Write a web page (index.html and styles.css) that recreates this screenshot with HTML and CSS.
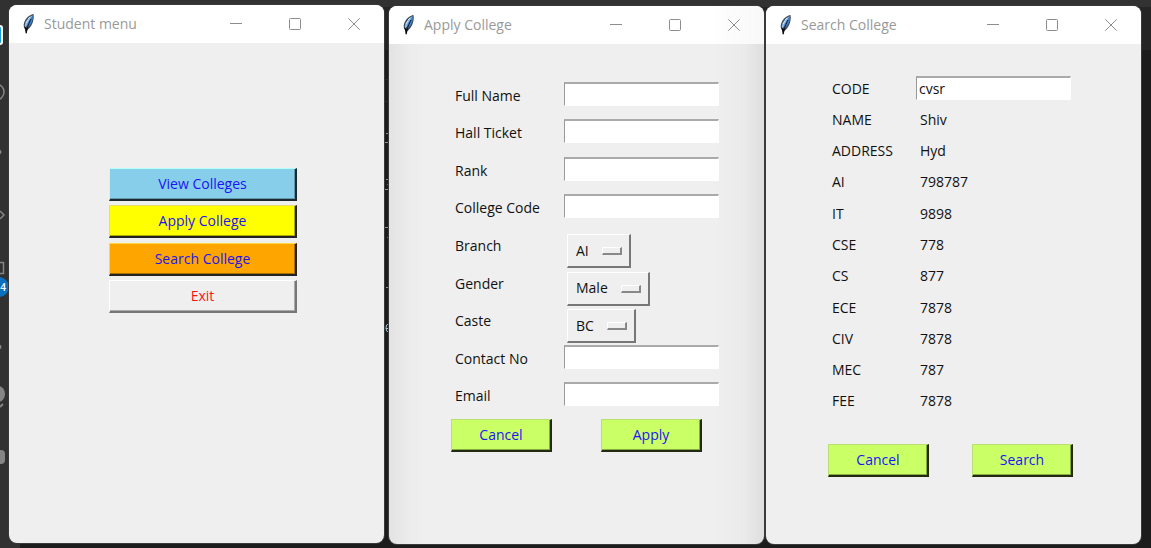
FILE: index.html
```html
<!DOCTYPE html>
<html lang="en">
<head>
<meta charset="utf-8">
<title>College admissions</title>
<link rel="stylesheet" href="styles.css">
</head>
<body>
<svg class="defs" aria-hidden="true">
  <symbol id="feather" viewBox="0 0 14 22">
    <path d="M11.500 1C8 1.500 3.500 5 2 10c-.7 2.500-.2 5 1.300 6.500L4 21l1.200-4C9 14.500 12.800 8 11.500 1z" fill="#3b4653"/>
    <path d="M10.700 2.200C7.500 3.500 4 7 3 11c-.4 1.600-.2 3 .4 4z" fill="#8fbdeb"/>
    <path d="M10.700 2.500c.8 4-1.200 8.500-5 12L5.500 10z" fill="#3f80d0"/>
    <path d="M9 6C7 10 5.500 13 4.300 20" stroke="#10151c" fill="none"/>
    <path d="M2.500 13l3 3-1.500 5z" fill="#090b10"/>
    <path d="M4 10l2-3M6 6l2-2" stroke="#d2e5f6"/>
  </symbol>
  <symbol id="minimize" viewBox="0 0 12 12"><path d="M0 5.500h12" stroke="#8d8d8d" fill="none"/></symbol>
  <symbol id="maximize" viewBox="0 0 12 12"><rect x=".5" y=".5" width="11" height="11" rx="1" stroke="#8d8d8d" fill="none"/></symbol>
  <symbol id="close" viewBox="0 0 12 12"><path d="M.3.3l11.400 11.400M11.700.3L.3 11.700" stroke="#8d8d8d" fill="none"/></symbol>
</svg>

<div class="editor" aria-hidden="true">
  <div class="editor-title"></div>
  <div class="editor-tabs"></div>
  <div class="editor-activity">
    <svg width="9" height="548" fill="none">
      <rect x="-8" y="26" width="10" height="18" rx="2" fill="#1b9cd8" stroke="#fff" stroke-width="2"/>
      <circle cx="-4" cy="92" r="8" stroke="#858585" stroke-width="1.500"/>
      <circle cx="-1" cy="152" r="2.500" fill="#858585"/>
      <path d="M0 211l4 4-4 4" stroke="#858585" stroke-width="1.500"/>
      <path d="M0 262.500h3.500v11H0" stroke="#858585" stroke-width="1.500"/>
      <circle cx="-1" cy="347" r="2.500" fill="#858585"/>
      <ellipse cx="-2" cy="394" rx="7" ry="8" fill="#858585"/>
      <path d="M0 407l3-3" stroke="#858585" stroke-width="2"/>
      <rect x="-10" y="450" width="15" height="14" rx="4" fill="#858585"/>
    </svg>
    <span class="badge">4</span>
  </div>
  <svg class="code" width="8" height="548" fill="none">
    <path d="M0 79.500h8M0 101.500h8" stroke="#2a2a2a"/>
    <path d="M3 133.500h3M1 142.500h5M3 179.500h3M1 189.500h5M2 227.500h4M3 287.500h3" stroke="#8296a5"/>
    <path d="M4 184.500h2M4 237.500h2" stroke="#4c68aa"/>
    <path d="M1.500 277v8M1.500 324v9" stroke="#b58a3d"/>
    <path d="M5.500 324q-2.500 0-2.500 4t2.500 4M3 328.500h4" stroke="#9cc4dd"/>
  </svg>
</div>

<main class="desktop">
  <section class="window window-menu">
    <header class="titlebar">
      <svg class="feather"><use href="#feather"/></svg>
      <h1>Student menu</h1>
      <button class="control" aria-label="Minimize"><svg><use href="#minimize"/></svg></button>
      <button class="control" aria-label="Maximize"><svg><use href="#maximize"/></svg></button>
      <button class="control" aria-label="Close"><svg><use href="#close"/></svg></button>
    </header>
    <nav class="menu">
      <button class="push sky">View Colleges</button>
      <button class="push yellow">Apply College</button>
      <button class="push orange">Search College</button>
      <button class="push plain">Exit</button>
    </nav>
  </section>

  <section class="window window-apply">
    <header class="titlebar">
      <svg class="feather"><use href="#feather"/></svg>
      <h1>Apply College</h1>
      <button class="control" aria-label="Minimize"><svg><use href="#minimize"/></svg></button>
      <button class="control" aria-label="Maximize"><svg><use href="#maximize"/></svg></button>
      <button class="control" aria-label="Close"><svg><use href="#close"/></svg></button>
    </header>
    <form class="apply">
      <div class="fields">
        <label for="name">Full Name</label><input class="entry" id="name" type="text">
        <label for="ticket">Hall Ticket</label><input class="entry" id="ticket" type="text">
        <label for="rank">Rank</label><input class="entry" id="rank" type="text">
        <label for="college">College Code</label><input class="entry" id="college" type="text">
        <label for="branch">Branch</label><span class="option"><select id="branch"><option>AI</option></select></span>
        <label for="gender">Gender</label><span class="option"><select id="gender"><option>Male</option></select></span>
        <label for="caste">Caste</label><span class="option"><select id="caste"><option>BC</option></select></span>
        <label for="contact">Contact No</label><input class="entry" id="contact" type="text">
        <label for="email">Email</label><input class="entry" id="email" type="text">
      </div>
      <div class="actions">
        <button class="push lime" type="button">Cancel</button>
        <button class="push lime" type="button">Apply</button>
      </div>
    </form>
  </section>

  <section class="window window-search">
    <header class="titlebar">
      <svg class="feather"><use href="#feather"/></svg>
      <h1>Search College</h1>
      <button class="control" aria-label="Minimize"><svg><use href="#minimize"/></svg></button>
      <button class="control" aria-label="Maximize"><svg><use href="#maximize"/></svg></button>
      <button class="control" aria-label="Close"><svg><use href="#close"/></svg></button>
    </header>
    <form class="search">
      <div class="details">
        <label for="code">CODE</label><input class="entry" id="code" type="text" value="cvsr">
        <span>NAME</span><output>Shiv</output>
        <span>ADDRESS</span><output>Hyd</output>
        <span>AI</span><output>798787</output>
        <span>IT</span><output>9898</output>
        <span>CSE</span><output>778</output>
        <span>CS</span><output>877</output>
        <span>ECE</span><output>7878</output>
        <span>CIV</span><output>7878</output>
        <span>MEC</span><output>787</output>
        <span>FEE</span><output>7878</output>
      </div>
      <div class="actions">
        <button class="push lime" type="button">Cancel</button>
        <button class="push lime" type="button">Search</button>
      </div>
    </form>
  </section>
</main>
</body>
</html>
```

FILE: styles.css
```css
*, *::after { box-sizing: border-box; }

body {
  margin: 0;
  min-height: 100vh;
  background: #1c1c1c;
  color: #111;
  font: 14px/20px "Open Sans", "Noto Sans", sans-serif;
}

button, input, select { font: inherit; color: inherit; }

.defs { position: absolute; width: 0; height: 0; }

/* Code editor behind the windows */
.editor { position: absolute; inset: 0; overflow: hidden; }
.editor-title { height: 7px; background: #323232; }
.editor-tabs { height: 43px; background: #252526; }
.editor-activity { position: absolute; top: 0; left: 0; width: 20px; height: 100%; background: #313131; }
.badge {
  position: absolute;
  top: 277px;
  left: -11px;
  width: 20px;
  height: 20px;
  padding-right: 3px;
  border-radius: 50%;
  background: #0a70bd;
  color: #fff;
  font-size: 10px;
  font-weight: 600;
  text-align: right;
}
.code { position: absolute; top: 0; left: 383px; }

/* Windows */
.desktop {
  position: relative;
  display: flex;
  min-height: 100vh;
  padding: 0 10px 0 9px;
}
.window {
  display: flex;
  flex: 1;
  flex-direction: column;
  min-width: 0;
  margin: 6px 0 4px;
  overflow: hidden;
  border-radius: 8px;
  background: #efefef;
  box-shadow: 0 0 0 1px #3a3a3a;
}
.window-menu { margin: 5px 0; }
.window-apply { margin-left: 5px; }
.window-search { margin-left: 2px; }

.titlebar {
  display: flex;
  align-items: center;
  height: 38px;
  padding: 0 1px 0 13px;
  background: #fff;
}
.titlebar h1 {
  flex: 1;
  margin: 0 0 0 8px;
  color: #999;
  font-size: 14px;
  font-weight: 400;
}
.feather { width: 14px; height: 22px; }
.control {
  display: grid;
  place-items: center;
  width: 59px;
  height: 38px;
  padding: 0;
  border: 0;
  background: none;
}
.control svg { width: 12px; height: 12px; }

/* Raised buttons */
.push {
  height: 33px;
  padding: 0;
  border: 2px solid;
  border-width: 1px 2px 2px 1px;
  color: #1a14f5;
}
.sky { background: #87ceeb; border-color: #b4ffff #1c2a30 #1c2a30 #b4ffff; box-shadow: inset -1px -1px #6098ae; }
.yellow { background: #ff0; border-color: #e8df62 #222 #222 #e8df62; box-shadow: inset -1px -1px #a8a800; }
.orange { background: #ffa500; border-color: #ffd83c #222 #222 #ffd83c; box-shadow: inset -1px -1px #a86e00; }
.plain { background: #efefef; border-color: #fff #777 #777 #fff; box-shadow: inset -1px -1px #aaa; color: #ff1414; }
.lime { width: 101px; background: #caff66; border-color: #b8df70 #222a12 #222a12 #b8df70; box-shadow: inset -1px -1px #86aa42; }

.menu {
  display: flex;
  flex-direction: column;
  justify-content: space-between;
  width: 188px;
  height: 270px;
  margin-left: 100px;
  padding-top: 125px;
}

/* Sunken entries */
.entry {
  width: 155px;
  height: 24px;
  padding: 0 2px;
  border: 1px solid #fff;
  border-top: 2px solid #aaa;
  border-left-color: #999;
  border-radius: 0;
  background: #fff;
}

.window-apply .titlebar { background: linear-gradient(90deg, #fff 85%, #f8f8f8); }
.apply {
  flex: 1;
  padding: 33px 0 0 62px;
  background:
    linear-gradient(270deg, rgb(0 0 0 / 7%), rgb(0 0 0 / 2%) 20px, transparent 50px),
    linear-gradient(90deg, rgb(0 0 0 / 5%), rgb(0 0 0 / 1%) 20px, transparent 40px);
}
.fields {
  display: grid;
  grid-template-columns: 109px 1fr;
  grid-template-rows: repeat(9, 1fr);
  align-items: center;
  height: 338px;
  padding-left: 4px;
}
.fields .entry { margin-bottom: 4px; }

.option {
  position: relative;
  align-self: start;
  justify-self: start;
  height: 30px;
  margin: 7px 0 0 3px;
}
.option select {
  height: 34px;
  padding: 0 40px 0 8px;
  border: 2px solid;
  border-width: 1px 2px 2px 1px;
  border-color: #fff #777 #777 #fff;
  border-radius: 0;
  background: #efefef;
  appearance: none;
}
.option::after {
  content: "";
  position: absolute;
  top: 13px;
  right: 9px;
  width: 20px;
  height: 8px;
  border: 2px solid;
  border-width: 1px 2px 2px 1px;
  border-color: #fff #888 #888 #fff;
  pointer-events: none;
}

.actions { display: flex; gap: 49px; }
.apply .actions { padding-top: 4px; }

.search { padding: 29px 0 0 62px; }
.details {
  display: grid;
  grid-template-columns: 84px 1fr;
  grid-template-rows: repeat(11, 1fr);
  align-items: center;
  height: 344px;
  padding-left: 4px;
}
.details .entry { margin-bottom: 2px; }
.details output { padding-left: 4px; }
.search .actions { gap: 43px; padding-top: 27px; }
```
